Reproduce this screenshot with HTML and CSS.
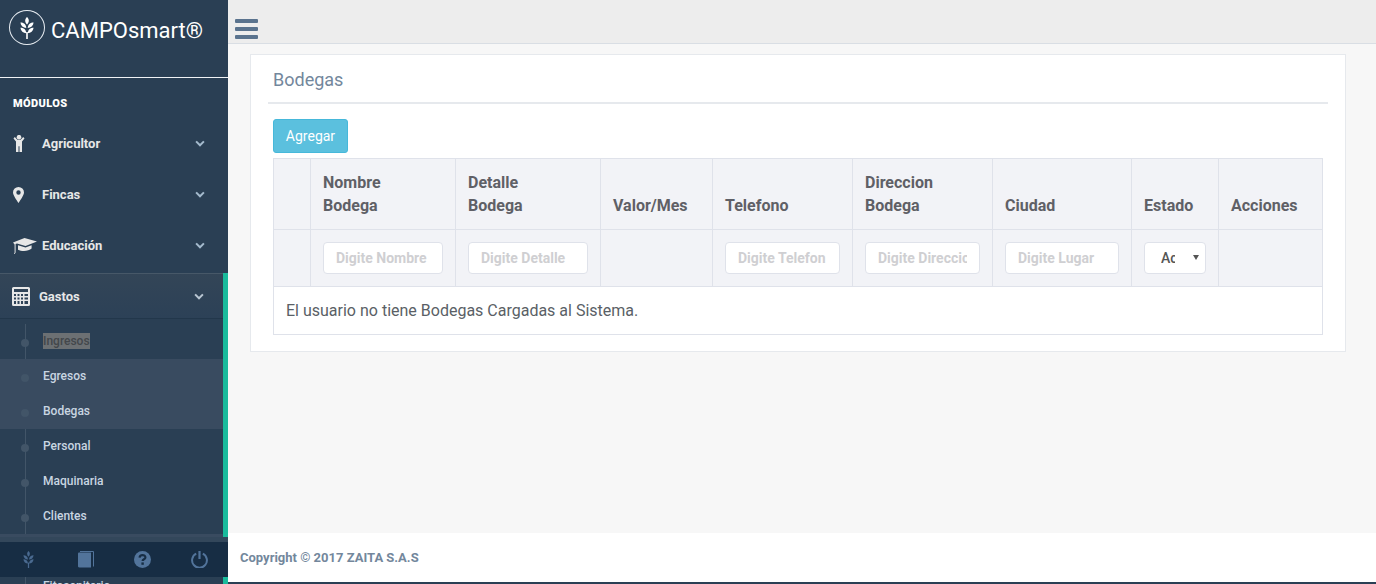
FILE: index.html
```html
<!DOCTYPE html>
<html lang="es">
<head>
<meta charset="utf-8">
<title>Bodegas - CAMPOsmart</title>
<link rel="stylesheet" href="styles.css">
</head>
<body>
<svg class="defs" width="0" height="0">
  <symbol id="wheat" viewBox="0 0 14 22">
    <path d="M7 0C9.2 2 9.6 5 7 7.6C4.4 5 4.8 2 7 0Z"/>
    <path d="M.4 5.6C3.6 5.6 6 7.4 6.3 11C3.2 11 .8 9.2.4 5.6Z"/>
    <path d="M13.6 5.6C10.4 5.6 8 7.4 7.7 11C10.8 11 13.2 9.2 13.6 5.6Z"/>
    <path d="M.4 10.8C3.6 10.8 6 12.6 6.3 16.2C3.2 16.2 .8 14.4.4 10.8Z"/>
    <path d="M13.6 10.8C10.4 10.8 8 12.6 7.7 16.2C10.8 16.2 13.2 14.4 13.6 10.8Z"/>
    <rect x="6.2" y="15" width="1.6" height="7"/>
  </symbol>
  <symbol id="chev" viewBox="0 0 11 7">
    <path d="M1.2 1.2L5.5 5.4L9.8 1.2" fill="none" stroke="currentColor" stroke-width="2.2"/>
  </symbol>
</svg>

<aside class="sidebar">
  <div class="brand">
    <span class="brand-logo">
      <svg class="wheat-logo" width="14" height="22"><use href="#wheat"/></svg>
    </span>
    <span class="brand-name">CAMPOsmart®</span>
  </div>
  <h3 class="section-title">MÓDULOS</h3>
  <ul class="menu">
    <li class="menu-item">
      <a class="menu-link">
        <span class="menu-icon">
          <svg width="12" height="17" viewBox="0 0 12 17"><circle cx="6" cy="2.2" r="2.3"/><path d="M.5 3.4L1.8 2L4.4 4.8H7.6L10.2 2L11.5 3.4L9 6.6V17H6.5V11.2H5.5V17H3V6.6Z"/></svg>
        </span>
        <span class="menu-text">Agricultor</span>
        <svg class="chev" width="10" height="7"><use href="#chev"/></svg>
      </a>
    </li>
    <li class="menu-item">
      <a class="menu-link">
        <span class="menu-icon">
          <svg width="11" height="16" viewBox="0 0 11 16"><path fill-rule="evenodd" d="M5.5 0A5.5 5.5 0 0 1 11 5.5C11 8.2 7.6 12.6 5.5 16C3.4 12.6 0 8.2 0 5.5A5.5 5.5 0 0 1 5.5 0ZM5.5 3.3A2.2 2.2 0 1 0 5.5 7.7A2.2 2.2 0 1 0 5.5 3.3Z"/></svg>
        </span>
        <span class="menu-text">Fincas</span>
        <svg class="chev" width="10" height="7"><use href="#chev"/></svg>
      </a>
    </li>
    <li class="menu-item">
      <a class="menu-link">
        <span class="menu-icon">
          <svg width="24" height="16" viewBox="0 0 24 16"><path d="M0 4.6L11.5 0L24 3.6L12.5 8L4 5.4L2.6 6V14.5L1.7 16H1L1.6 14.5V6.4Z"/><path d="M5 7.2L12.5 9.4L18.6 7.2V10.6C15.6 13.6 8.6 13.6 5 11.8Z"/></svg>
        </span>
        <span class="menu-text">Educación</span>
        <svg class="chev" width="10" height="7"><use href="#chev"/></svg>
      </a>
    </li>
    <li class="menu-item menu-item-active">
      <a class="menu-link menu-link-active">
        <span class="menu-icon menu-icon-active">
          <svg width="18" height="19" viewBox="0 0 18 19"><path fill-rule="evenodd" d="M1.5 0H16.5A1.5 1.5 0 0 1 18 1.5V17.5A1.5 1.5 0 0 1 16.5 19H1.5A1.5 1.5 0 0 1 0 17.5V1.5A1.5 1.5 0 0 1 1.5 0ZM2 2V5H16V2ZM2 7V9H4V7ZM5.5 7V9H7.5V7ZM9 7V9H11V7ZM12.5 7V9H16V7ZM2 10.5V12.5H4V10.5ZM5.5 10.5V12.5H7.5V10.5ZM9 10.5V12.5H11V10.5ZM12.5 10.5V12.5H16V10.5ZM2 14V17H4V14ZM5.5 14V17H7.5V14ZM9 14V17H11V14ZM12.5 14V17H16V14Z"/></svg>
        </span>
        <span class="menu-text">Gastos</span>
        <svg class="chev chev-active" width="10" height="7"><use href="#chev"/></svg>
      </a>
      <ul class="submenu">
        <li class="sub-item"><a class="sub-link"><span class="sub-selected">Ingresos</span></a></li>
        <li class="sub-item sub-item-hover"><a class="sub-link">Egresos</a></li>
        <li class="sub-item sub-item-hover"><a class="sub-link">Bodegas</a></li>
        <li class="sub-item"><a class="sub-link">Personal</a></li>
        <li class="sub-item"><a class="sub-link">Maquinaria</a></li>
        <li class="sub-item"><a class="sub-link">Clientes</a></li>
        <li class="sub-item sub-item-hover sub-item-empty"></li>
        <li class="sub-item"><a class="sub-link">Fitosanitario</a></li>
      </ul>
    </li>
  </ul>
  <div class="sidebar-footer">
    <a class="footer-link"><svg class="footer-wheat" width="11" height="17"><use href="#wheat"/></svg></a>
    <a class="footer-link">
      <svg width="16" height="17" viewBox="0 0 16 17"><path d="M0 2.4C0 1.6.6 1.4 1.4 1.4H13V16.4H1.4C.6 16.4 0 16 0 15.2Z"/><path d="M2 .5H15.5V15.5" fill="none" stroke="currentColor"/></svg>
    </a>
    <a class="footer-link">
      <svg width="17" height="17" viewBox="0 0 17 17"><circle cx="8.5" cy="8.5" r="8.5"/><path d="M5.6 6.6C5.8 3.2 11.4 3.4 11.4 6.4C11.4 8.4 8.6 8.2 8.6 10" fill="none" stroke="#172d44" stroke-width="2.2"/><rect x="7.4" y="11.4" width="2.4" height="2.4" fill="#172d44"/></svg>
    </a>
    <a class="footer-link">
      <svg width="17" height="17" viewBox="0 0 17 17"><path d="M5.2 2.7A7.4 7.4 0 1 0 11.8 2.7" fill="none" stroke="currentColor" stroke-width="2"/><path d="M8.5 0V8" fill="none" stroke="currentColor" stroke-width="2.2"/></svg>
    </a>
  </div>
</aside>

<main class="main">
  <header class="topbar">
    <a class="hamburger"><span class="bar"></span><span class="bar"></span><span class="bar"></span></a>
  </header>
  <div class="content">
    <section class="panel">
      <div class="panel-title"><h2 class="panel-heading">Bodegas</h2></div>
      <div class="panel-body">
        <button class="btn-info" type="button">Agregar</button>
        <table class="grid">
          <colgroup>
            <col class="c-sel"><col class="c-name"><col class="c-name"><col class="c-val"><col class="c-wide"><col class="c-wide"><col class="c-city"><col class="c-state"><col class="c-act">
          </colgroup>
          <thead>
            <tr class="row-head">
              <th></th>
              <th>Nombre<br>Bodega</th>
              <th>Detalle<br>Bodega</th>
              <th>Valor/Mes</th>
              <th>Telefono</th>
              <th>Direccion<br>Bodega</th>
              <th>Ciudad</th>
              <th>Estado</th>
              <th>Acciones</th>
            </tr>
            <tr class="row-filter">
              <th></th>
              <th><input class="field" placeholder="Digite Nombre"></th>
              <th><input class="field" placeholder="Digite Detalle"></th>
              <th></th>
              <th><input class="field" placeholder="Digite Telefon"></th>
              <th><input class="field" placeholder="Digite Direccion"></th>
              <th><input class="field" placeholder="Digite Lugar"></th>
              <th><span class="select-wrap"><select class="field field-select"><option>Activo</option></select></span></th>
              <th></th>
            </tr>
          </thead>
          <tbody>
            <tr class="row-empty"><td colspan="9">El usuario no tiene Bodegas Cargadas al Sistema.</td></tr>
          </tbody>
        </table>
      </div>
    </section>
  </div>
  <footer class="page-footer">Copyright © 2017 ZAITA S.A.S</footer>
</main>
</body>
</html>
```

FILE: styles.css
```css
* { box-sizing: border-box; }
html, body { margin: 0; height: 584px; overflow: hidden; }
body {
  display: flex;
  background: #2a3f54;
  font-family: Roboto, "Liberation Sans", sans-serif;
  color: #5a5f66;
}
.defs { position: absolute; }
ul { list-style: none; margin: 0; padding: 0; }

/* Sidebar */
.sidebar {
  position: relative;
  flex: 0 0 228px;
  height: 584px;
  overflow: hidden;
  background: #2a3f54;
  color: #ecf0f1;
}
.brand {
  display: flex;
  align-items: flex-start;
  height: 78px;
  padding: 10px 0 0 9px;
  border-bottom: 1px solid #f0f3f6;
}
.brand-logo {
  display: flex;
  align-items: center;
  justify-content: center;
  flex: 0 0 36px;
  height: 35px;
  border: 1px solid #e8edf2;
  border-radius: 50%;
}
.wheat-logo { fill: #fff; }
.brand-name {
  margin: 5px 0 0 6px;
  font-size: 22px;
  line-height: 32px;
  color: #fff;
}
.section-title {
  margin: 0;
  height: 40px;
  padding: 19px 0 0 13px;
  font-size: 11px;
  line-height: 14px;
  font-weight: 900;
  letter-spacing: .4px;
  color: #fff;
}
.menu-item { height: 51px; }
.menu-link {
  display: flex;
  align-items: center;
  height: 51px;
  padding: 0 23px 0 13px;
}
.menu-icon {
  display: flex;
  align-items: center;
  flex: 0 0 29px;
  fill: #e7e7e7;
}
.menu-icon svg { flex: none; }
.menu-text {
  font-size: 13px;
  font-weight: 700;
  color: #e7e7e7;
}
.chev { margin-left: auto; color: #a4bacd; }

.menu-item-active {
  height: auto;
  margin-top: 2px;
  border-right: 5px solid #1abb9c;
}
.menu-link-active {
  height: 46px;
  padding: 0 19px 0 12px;
  border-top: 1px solid #475868;
  border-bottom: 1px solid #22374b;
  background: linear-gradient(#334557, #2c4157);
}
.menu-icon-active { flex-basis: 27px; }
.chev-active { color: #b9c6d2; }

.submenu {
  position: relative;
  margin-top: 5px;
}
.submenu::before {
  content: "";
  position: absolute;
  left: 25px;
  top: 0;
  bottom: 0;
  width: 1px;
  background: #425568;
}
.sub-item {
  position: relative;
  height: 35px;
}
.sub-item::before {
  content: "";
  position: absolute;
  left: 21px;
  top: 15px;
  width: 8px;
  height: 8px;
  border-radius: 50%;
  background: #425568;
}
.sub-item-hover { background: #394b60; }
.sub-item-empty::before { display: none; }
.sub-link {
  display: block;
  padding-left: 43px;
  font-size: 12px;
  font-weight: 500;
  line-height: 35px;
  color: #c9d6e2;
}
.sub-selected {
  padding: 1px 0;
  background: #6c7073;
  color: #43474b;
}
.sidebar-footer {
  position: absolute;
  left: 0;
  right: 0;
  bottom: 7px;
  display: flex;
  height: 40px;
  border-top: 5px solid #33475b;
  background: #172d44;
  fill: #52749b;
  color: #52749b;
}
.footer-link {
  display: flex;
  align-items: center;
  justify-content: center;
  flex: 1;
}
.footer-wheat { fill: #4a6a90; }

/* Main column */
.main {
  display: flex;
  flex: 1;
  flex-direction: column;
  height: 582px;
  background: #f7f7f7;
}
.topbar {
  flex: 0 0 44px;
  padding: 19px 0 0 7px;
  background: #ededed;
  border-bottom: 1px solid #d9dee4;
}
.hamburger {
  display: flex;
  flex-direction: column;
  gap: 4px;
  width: 23px;
}
.bar {
  height: 4px;
  border-radius: 1px;
  background: #5a738e;
}
.content {
  flex: 1;
  padding: 10px 31px 0 22px;
}
.panel {
  padding: 0 17px 16px;
  background: #fff;
  border: 1px solid #e6e9ed;
}
.panel-title {
  padding: 14px 5px 11px;
  border-bottom: 2px solid #e6e9ed;
}
.panel-heading {
  margin: 0;
  font-size: 18px;
  font-weight: 400;
  line-height: 22px;
  color: #73879c;
}
.panel-body { padding: 15px 5px 0; }
.btn-info {
  display: block;
  width: 75px;
  height: 34px;
  margin-bottom: 5px;
  padding: 0;
  background: #5bc0de;
  border: 1px solid #46b8da;
  border-radius: 3px;
  font: 400 14px Roboto, "Liberation Sans", sans-serif;
  color: #fff;
}

/* Table */
.grid {
  width: 1049px;
  table-layout: fixed;
  border-collapse: collapse;
  font-size: 16px;
  line-height: 23px;
}
.c-sel { width: 37px; }
.c-name { width: 145px; }
.c-val { width: 112px; }
.c-wide { width: 140px; }
.c-city { width: 139px; }
.c-state { width: 87px; }
.c-act { width: 104px; }
.grid th, .grid td {
  padding: 12px;
  border: 1px solid #dfe2ea;
  text-align: left;
}
.grid th {
  background: #f2f3f7;
  font-weight: 700;
  color: #5f6066;
  vertical-align: bottom;
}
.row-head th { height: 71px; }
.row-filter th { height: 57px; vertical-align: middle; }
.row-empty td { height: 48px; padding: 11px 12px 12px; }
.field {
  display: block;
  width: 100%;
  height: 32px;
  padding: 0 12px;
  background: #fff;
  border: 1px solid #dfe2ea;
  border-radius: 4px;
  font: 500 14px Roboto, "Liberation Sans", sans-serif;
  color: #555;
}
.field::placeholder { color: #cfcfd2; opacity: 1; font-weight: 700; }
.select-wrap {
  position: relative;
  display: block;
}
.select-wrap::after {
  content: "";
  position: absolute;
  right: 7px;
  top: 13px;
  border-left: 3px solid transparent;
  border-right: 3px solid transparent;
  border-top: 5px solid #555;
  pointer-events: none;
}
.field-select {
  appearance: none;
  padding: 0 30px 0 16px;
}

/* Page footer */
.page-footer {
  flex: 0 0 49px;
  padding-left: 12px;
  background: #fff;
  font-size: 13px;
  font-weight: 700;
  line-height: 49px;
  color: #73879c;
}
```
